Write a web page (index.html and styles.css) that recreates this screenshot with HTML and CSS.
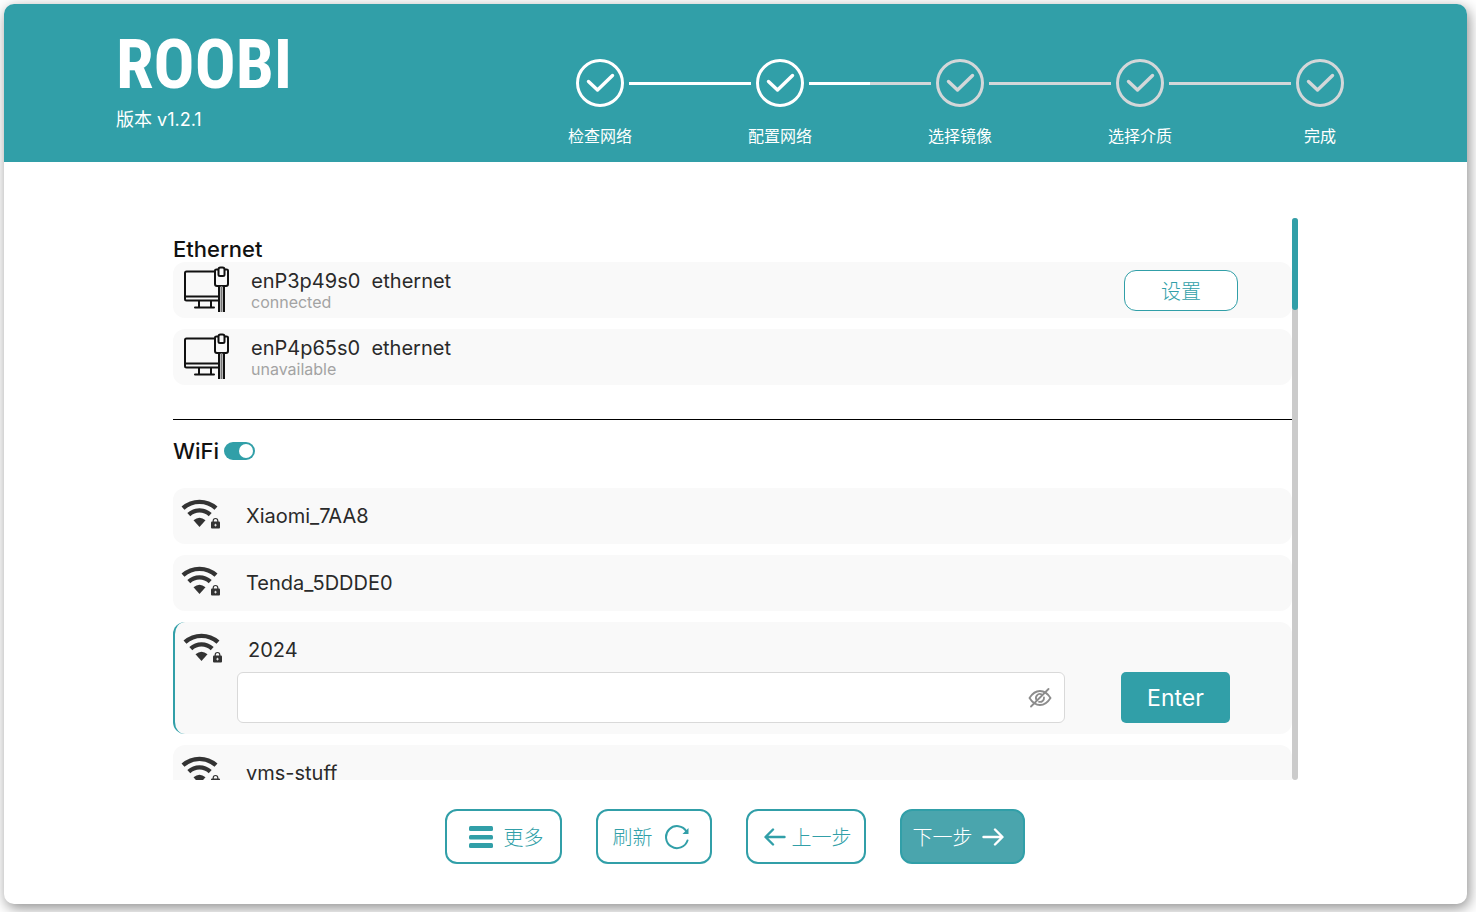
FILE: index.html
```html
<!DOCTYPE html>
<html lang="zh-CN">
<head>
<meta charset="utf-8">
<meta name="viewport" content="width=device-width, initial-scale=1">
<title>ROOBI</title>
<link rel="stylesheet" href="styles.css">
</head>
<body>
<svg class="symbols" aria-hidden="true">
  <symbol id="check" viewBox="0 0 48 48">
    <circle cx="24" cy="24" r="22.5" fill="none" stroke="currentColor" stroke-width="3"/>
    <path d="M12.500 22.500 21.500 31 36.500 16.500" fill="none" stroke="currentColor" stroke-width="3.400" stroke-linecap="round" stroke-linejoin="round"/>
  </symbol>
  <symbol id="wired" viewBox="0 0 48 48">
    <g fill="none" stroke="#111" stroke-width="2" stroke-linejoin="round" stroke-linecap="round">
      <path d="M32 5.500H4.500Q3 5.500 3 7V33Q3 34.500 4.500 34.500H36M3.500 30.500H36M17 34.500V41M29 34.500V41M13 41.500H32"/>
      <path d="M33 4.500V18Q33 20 35 20H44Q46 20 46 18V4.500Q46 3.500 44.500 3.500H42.500V8.500Q42.500 10 41 10H38Q36.500 10 36.500 8.500V3.500Q36.500 1.500 38.500 1.500H40.500Q42.500 1.500 42.500 3.500M33 4.500Q33 3.500 34.500 3.500H36.500"/>
      <path d="M37 20V46M42 20V46" stroke-linecap="butt"/>
      <path d="M39.500 20V46" stroke="#777" stroke-width="2" stroke-linecap="butt"/>
    </g>
  </symbol>
  <symbol id="wifi" viewBox="0 0 40 34">
    <g fill="none" stroke="#333" stroke-width="4.400">
      <path d="M2 9.200C11.500 .8 25.500 .8 35 9.200"/>
      <path d="M7.800 15.600C14 10 23 10 29.200 15.600"/>
    </g>
    <path d="M12.500 21.300Q18.500 16.200 24.500 21.300L18.500 28Z" fill="#333"/>
    <path d="M32.200 24V21.800A2.300 2.300 0 0 1 36.800 21.800V24" fill="none" stroke="#333" stroke-width="1.200"/>
    <rect x="30" y="22.600" width="9" height="7" rx="1" fill="#333"/>
    <path d="M34.500 24.800V27.400M33.200 26.100H35.800" stroke="#ddd" stroke-width="1"/>
  </symbol>
</svg>

<main class="card">
  <header class="header">
    <div class="brand">
      <h1 class="logo">ROOBI</h1>
      <p class="version">版本 v1.2.1</p>
    </div>
    <ol class="steps">
      <li class="step done"><div class="rail"><svg><use href="#check"/></svg></div><span>检查网络</span></li>
      <li class="step done"><div class="rail"><svg><use href="#check"/></svg></div><span>配置网络</span></li>
      <li class="step"><div class="rail"><svg><use href="#check"/></svg></div><span>选择镜像</span></li>
      <li class="step"><div class="rail"><svg><use href="#check"/></svg></div><span>选择介质</span></li>
      <li class="step"><div class="rail"><svg><use href="#check"/></svg></div><span>完成</span></li>
    </ol>
  </header>

  <div class="panel">
    <div class="scroll">
      <section class="ethernet">
        <h2 class="title">Ethernet</h2>
        <ul class="list">
          <li class="row">
            <svg class="wired-icon"><use href="#wired"/></svg>
            <div class="device"><p class="name">enP3p49s0&nbsp; ethernet</p><p class="state">connected</p></div>
            <button class="settings" type="button">设置</button>
          </li>
          <li class="row">
            <svg class="wired-icon"><use href="#wired"/></svg>
            <div class="device"><p class="name">enP4p65s0&nbsp; ethernet</p><p class="state">unavailable</p></div>
          </li>
        </ul>
      </section>

      <section class="wifi">
        <div class="wifi-head">
          <h2 class="title" id="wifi-title">WiFi</h2>
          <input class="switch" type="checkbox" role="switch" aria-labelledby="wifi-title" checked>
        </div>
        <ul class="list">
          <li class="row"><svg class="wifi-icon"><use href="#wifi"/></svg><p class="name">Xiaomi_7AA8</p></li>
          <li class="row"><svg class="wifi-icon"><use href="#wifi"/></svg><p class="name">Tenda_5DDDE0</p></li>
          <li class="active">
            <div class="network"><svg class="wifi-icon"><use href="#wifi"/></svg><p class="name" id="ssid">2024</p></div>
            <form class="join">
              <div class="field">
                <input class="password" type="password" aria-labelledby="ssid">
                <button class="eye" type="button" aria-label="显示密码">
                  <svg viewBox="0 0 24 20" fill="none" stroke="#8c8c8c" stroke-width="1.800" stroke-linecap="round"><path d="M1.500 10C4.500 5.200 8 3 12 3S19.500 5.200 22.500 10C19.500 14.800 16 17 12 17S4.500 14.800 1.500 10Z"/><path d="M8.500 12A4 4 0 0 1 13.500 6.300M16 9.500A4 4 0 0 1 11 13.800"/><path d="M20.500 1 3 18.500"/></svg>
                </button>
              </div>
              <button class="enter" type="button">Enter</button>
            </form>
          </li>
          <li class="row"><svg class="wifi-icon"><use href="#wifi"/></svg><p class="name">vms-stuff</p></li>
        </ul>
      </section>
    </div>
    <div class="track"><div class="thumb"></div></div>
  </div>

  <footer class="actions">
    <button class="action more" type="button">
      <svg width="24" height="24" viewBox="0 0 24 24" fill="currentColor"><rect y="1" width="24" height="5" rx="1.500"/><rect y="10" width="24" height="4.500" rx="1.500"/><rect y="18" width="24" height="5" rx="1.500"/></svg>更多</button>
    <button class="action refresh" type="button">刷新<svg width="26" height="26" viewBox="0 0 26 26"><path d="M23.500 16.500A11 11 0 1 1 22.500 7.500" fill="none" stroke="currentColor" stroke-width="2" stroke-linecap="round"/><path d="M24.500 4V10H18.500Z" fill="currentColor"/></svg></button>
    <button class="action previous" type="button"><svg width="22" height="20" viewBox="0 0 22 20" fill="none" stroke="currentColor" stroke-width="2.400" stroke-linecap="round" stroke-linejoin="round"><path d="M20.500 10H2M9 2.500 1.500 10 9 17.500"/></svg>上一步</button>
    <button class="action next" type="button">下一步<svg width="22" height="20" viewBox="0 0 22 20" fill="none" stroke="currentColor" stroke-width="2.400" stroke-linecap="round" stroke-linejoin="round"><path d="M1.500 10H20M13 2.500 20.500 10 13 17.500"/></svg></button>
  </footer>
</main>
</body>
</html>
```
FILE: styles.css
```css
* { box-sizing: border-box; }

body {
  margin: 0;
  padding: 4px 9px 8px 4px;
  background: #fff;
  color: #2a2a2a;
  font-family: Inter, "Noto Sans CJK SC", sans-serif;
}

h1, h2, p, ul, ol { margin: 0; padding: 0; font-weight: 400; }
ul, ol { list-style: none; }
button, input { font: inherit; }
button { cursor: pointer; }
svg { flex: none; display: block; }
.symbols { position: absolute; width: 0; height: 0; }

.card {
  display: flex;
  flex-direction: column;
  min-height: calc(100vh - 12px);
  border-radius: 10px;
  background: #fff;
  box-shadow: 2px 4px 14px rgba(0, 0, 0, 0.45);
}

.header {
  display: flex;
  justify-content: space-between;
  align-items: flex-start;
  padding: 24px 57px 14px 112px;
  border-radius: 10px 10px 0 0;
  background: #319fa8;
  color: #fff;
}

.logo {
  font-family: "Roboto Condensed", "Liberation Sans Narrow", sans-serif;
  font-size: 68px;
  font-weight: 700;
  line-height: 74px;
}

.version { font-size: 18px; line-height: 36px; }

.steps { display: flex; padding-top: 31px; }
.step { width: 180px; text-align: center; color: #d3d7d9; }
.step.done { color: #fff; }
.rail { display: flex; align-items: center; gap: 5px; }
.rail svg { width: 48px; height: 48px; }
.rail::before, .rail::after { content: ""; flex: 1; height: 3px; background: currentColor; }
.step:first-child .rail::before, .step:last-child .rail::after { visibility: hidden; }
.step span { display: block; margin-top: 17px; color: #fff; font-size: 16px; line-height: 24px; }

.panel { display: flex; height: 562px; margin: 56px 169px 0; }
.scroll { flex: 1; overflow-y: auto; scrollbar-width: none; }
.track { width: 6px; border-radius: 3px; background: #cbcbcb; }
.thumb { height: 92px; border-radius: 3px; background: #319fa8; }

.title { color: #111; font-size: 22px; font-weight: 500; line-height: 26px; }
.ethernet { padding: 18px 0 34px; border-bottom: 1px solid #000; }
.wifi-head { display: flex; align-items: center; gap: 5px; padding: 18px 0 24px; }
.list { display: flex; flex-direction: column; gap: 11px; }

.row, .active { border-radius: 12px; background: #f9f9f9; }
.row, .network { display: flex; align-items: center; height: 56px; padding-left: 8px; }
.row { padding-right: 54px; }
.active { border-left: 2px solid #319fa8; padding-bottom: 11px; }
.network { height: 50px; padding-top: 5px; }

.wired-icon { width: 50px; height: 48px; margin-right: 20px; }
.wifi-icon { width: 40px; height: 34px; margin-right: 25px; }
.device { flex: 1; }
.name { font-size: 20px; font-weight: 400; line-height: 24px; }
.state { color: #a3a3a3; font-size: 16px; line-height: 18px; }

.settings {
  width: 114px;
  height: 41px;
  border: 1px solid #319fa8;
  border-radius: 12px;
  background: #fff;
  color: #319fa8;
  font-size: 20px;
  font-weight: 300;
}

.switch {
  appearance: none;
  display: flex;
  justify-content: flex-end;
  width: 31px;
  height: 18px;
  margin: 0;
  padding: 2px;
  border-radius: 9px;
  background: #319fa8;
}
.switch::before { content: ""; width: 14px; height: 14px; border-radius: 50%; background: #fff; }
.switch:not(:checked) { justify-content: flex-start; background: #bbb; }

.join { display: flex; gap: 56px; padding: 0 62px; }
.field {
  display: flex;
  flex: 1;
  align-items: center;
  height: 51px;
  padding-right: 12px;
  border: 1px solid #d9d9d9;
  border-radius: 6px;
  background: #fff;
}
.password { flex: 1; min-width: 0; height: 100%; padding: 0 12px; border: 0; background: none; outline: 0; font-size: 20px; }
.eye { padding: 0; border: 0; background: none; }
.eye svg { width: 24px; height: 20px; }
.enter { width: 109px; height: 51px; border: 0; border-radius: 5px; background: #319fa8; color: #fff; font-size: 23px; }

.actions { display: flex; justify-content: center; gap: 34px; padding: 29px 2px 40px 0; }
.action {
  display: flex;
  align-items: center;
  justify-content: center;
  height: 55px;
  padding: 0 15px;
  border: 2px solid #319fa8;
  border-radius: 12px;
  background: #fff;
  color: #319fa8;
  font-size: 20px;
  font-weight: 300;
}
.more { gap: 11px; padding: 0 16px 0 22px; }
.refresh { gap: 11px; padding: 0 20px 0 15px; }
.previous { gap: 6px; padding: 0 12px 0 16px; }
.next { gap: 9px; padding: 0 19px 0 11px; background: #4aa5ad; color: #fff; }
```
